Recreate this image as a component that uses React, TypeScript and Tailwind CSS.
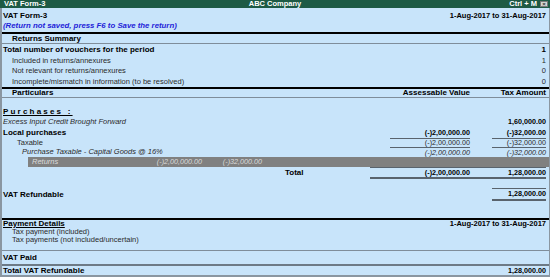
import React from "react";

function Vals({ a, t, cls = "", lineTop = false }: { a?: string; t?: string; cls?: string; lineTop?: boolean }) {
  return (
    <div className={`ml-auto flex h-full items-stretch pr-[3px] ${cls}`}>
      <div className={`w-[80px] flex items-center justify-end ${lineTop ? "border-t border-[#59636d]" : ""}`}>{a}</div>
      <div className="w-[22px]" />
      <div className={`w-[54px] flex items-center justify-end ${lineTop ? "border-t border-[#59636d]" : ""}`}>{t}</div>
    </div>
  );
}

export default function App() {
  return (
    <div className="w-[550px] h-[277px] overflow-hidden font-['Liberation_Sans',Arial,sans-serif] text-[8px] leading-none text-black bg-[#c8e4fa]">
      {/* Title bar */}
      <div className="h-[8px] bg-[#1d5a45] grid grid-cols-[1fr_auto_1fr] items-center text-white font-bold text-[7.5px]">
        <span className="pl-[4px]">VAT Form-3</span>
        <span>ABC Company</span>
        <div className="flex items-center justify-end pr-[2px]">
          <span className="mr-[3px]">Ctrl + M</span>
          <span className="w-[8px] h-[6px] bg-[#d0d4d0] text-[#333] flex items-center justify-center text-[6px] leading-none border border-[#777]">×</span>
        </div>
      </div>

      {/* Body */}
      <div className="h-[269px] border-l-2 border-r border-[#8a96a1] flex flex-col">
        <div className="h-[2px]" />
        <div className="h-[11px] flex items-center font-bold pl-[1px] pr-[3px]">
          <span>VAT Form-3</span>
          <span className="ml-auto text-[7.5px]">1-Aug-2017 to 31-Aug-2017</span>
        </div>
        <div className="h-[9px] flex items-center italic font-bold text-[7.8px] text-[#1e22d8] pl-[1px]">
          (Return not saved, press F6 to Save the return)
        </div>
        <div className="h-[2px]" />
        <div className="h-[2px] bg-black" />
        <div className="h-[9px] flex items-center font-bold pl-[10px]">Returns Summary</div>
        <div className="h-[1px] bg-[#7f8d9a]" />

        <div className="h-[11px] flex items-center font-bold pl-[1px] pr-[3px]">
          <span>Total number of vouchers for the period</span>
          <span className="ml-auto">1</span>
        </div>
        <div className="h-[11px] flex items-center text-[7.5px] text-[#2a2a2a] pl-[10px] pr-[3px]">
          <span>Included in returns/annexures</span>
          <span className="ml-auto">1</span>
        </div>
        <div className="h-[10px] flex items-center text-[7.5px] text-[#2a2a2a] pl-[10px] pr-[3px]">
          <span>Not relevant for returns/annexures</span>
          <span className="ml-auto">0</span>
        </div>
        <div className="h-[11px] flex items-center text-[7.5px] text-[#2a2a2a] pl-[10px] pr-[3px]">
          <span>Incomplete/mismatch in information (to be resolved)</span>
          <span className="ml-auto">0</span>
        </div>
        <div className="h-[2px] bg-black" />

        <div className="h-[8px] flex items-center font-bold pl-[10px]">
          <span>Particulars</span>
          <Vals a="Assessable Value" t="Tax Amount" />
        </div>
        <div className="h-[1px] bg-[#7f8d9a]" />

        <div className="h-[9px]" />
        <div className="h-[10px] flex items-center font-bold pl-[1px]">
          <span className="underline tracking-[2.2px]">Purchases :</span>
        </div>
        <div className="h-[10px] flex items-center italic text-[7.5px] text-[#2a2a2a] pl-[1px]">
          <span>Excess Input Credit Brought Forward</span>
          <Vals t="1,60,000.00" cls="font-bold not-italic text-black text-[7.2px]" />
        </div>
        <div className="h-[11px] flex items-center font-bold pl-[1px]">
          <span>Local purchases</span>
          <Vals a="(-)2,00,000.00" t="(-)32,000.00" cls="text-[7.2px]" />
        </div>
        <div className="h-[9px] flex items-center text-[7.5px] text-[#2a2a2a] pl-[15px]">
          <span>Taxable</span>
          <Vals a="(-)2,00,000.00" t="(-)32,000.00" cls="text-[7.2px]" lineTop />
        </div>
        <div className="h-[10px] flex items-center italic text-[7.5px] text-[#2a2a2a] pl-[20px]">
          <span>Purchase Taxable - Capital Goods @ 16%</span>
          <Vals a="(-)2,00,000.00" t="(-)32,000.00" cls="text-[7.2px]" lineTop />
        </div>
        <div className="h-[10px] ml-[26px] bg-[#808080] flex items-center italic text-[7.5px] text-[#dcdcdc]">
          <span className="pl-[4px] w-[124px]">Returns</span>
          <span className="w-[50px] text-right text-[7.2px]">(-)2,00,000.00</span>
          <span className="w-[60px] text-right text-[7.2px]">(-)32,000.00</span>
        </div>
        <div className="h-[12px] flex items-stretch font-bold">
          <span className="pl-[283px] flex items-center">Total</span>
          <div className="ml-auto mr-[3px] w-[176px] border-t border-b-2 border-[#59636d] flex items-center text-[7.2px]">
            <span className="w-[100px] text-right">(-)2,00,000.00</span>
            <span className="w-[76px] text-right">1,28,000.00</span>
          </div>
        </div>
        <div className="h-[9px]" />
        <div className="h-[13px] flex items-center font-bold pl-[1px]">
          <span>VAT Refundable</span>
          <div className="ml-auto mr-[3px] w-[54px] h-full border-t border-b-2 border-[#59636d] flex items-center justify-end text-[7.2px]">
            1,28,000.00
          </div>
        </div>
        <div className="h-[17px]" />
        <div className="h-[2px] bg-black" />

        <div className="h-[8px] flex items-center font-bold pl-[1px] pr-[3px]">
          <span className="underline">Payment Details</span>
          <span className="ml-auto text-[7.5px]">1-Aug-2017 to 31-Aug-2017</span>
        </div>
        <div className="h-[8px] flex items-center text-[7.5px] text-[#2a2a2a] pl-[10px]">Tax payment (included)</div>
        <div className="h-[8px] flex items-center text-[7.5px] text-[#2a2a2a] pl-[10px]">Tax payments (not included/uncertain)</div>
        <div className="h-[6px]" />
        <div className="h-[1px] bg-[#7f8d9a]" />
        <div className="h-[13px] flex items-center font-bold pl-[1px]">VAT Paid</div>
        <div className="h-[2px] bg-[#6d7a86]" />
        <div className="h-[9px] flex items-center font-bold pl-[1px] pr-[3px]">
          <span>Total VAT Refundable</span>
          <span className="ml-auto text-[7.2px]">1,28,000.00</span>
        </div>
        <div className="h-[2px] bg-[#8a96a1]" />
      </div>
    </div>
  );
}
